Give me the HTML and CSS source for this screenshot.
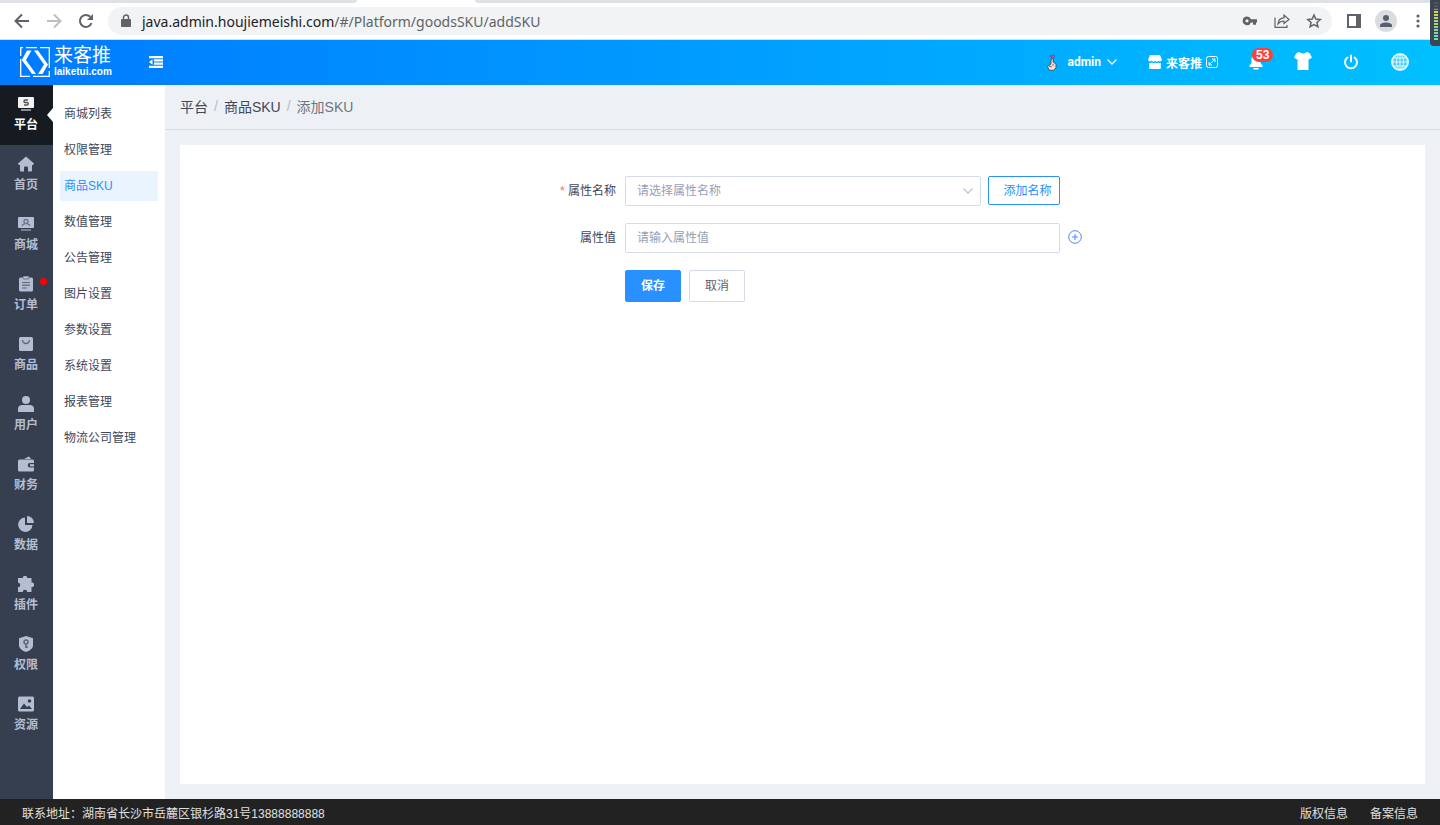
FILE: index.html
```html
<!DOCTYPE html>
<html lang="zh-CN">
<head>
    <meta charset="UTF-8">
    <meta name="viewport" content="width=device-width, initial-scale=1.0">
    <title>添加SKU</title>
    <link rel="stylesheet" href="styles.css">
</head>
<body>
    <div class="browser">
        <div class="tab-strip">
            <span class="tab-left"></span>
            <span class="tab-right"></span>
        </div>
        <div class="toolbar">
            <button type="button" class="icon-btn" aria-label="Back">
                <svg width="16" height="16" viewBox="0 0 16 16" fill="none" stroke="#5f6368" stroke-width="2"><path d="M15 8H2M8 1.5L1.500 8L8 14.500"/></svg>
            </button>
            <button type="button" class="icon-btn" aria-label="Forward">
                <svg width="16" height="16" viewBox="0 0 16 16" fill="none" stroke="#bcbec1" stroke-width="2"><path d="M1 8H14M8 1.500L14.500 8L8 14.500"/></svg>
            </button>
            <button type="button" class="icon-btn" aria-label="Reload">
                <svg width="16" height="16" viewBox="0 0 16 16" fill="none" stroke="#5f6368" stroke-width="2"><path d="M13.500 10.200A6 6 0 1 1 12.300 3.800"/><path d="M15 1v6H9z" fill="#5f6368" stroke="none"/></svg>
            </button>
            <div class="omnibox">
                <svg width="10" height="14" viewBox="0 0 10 14"><rect y="5" width="10" height="8" rx="1" fill="#5f6368"/><path d="M2.500 6V3.500a2.500 2.500 0 0 1 5 0V6" fill="none" stroke="#5f6368" stroke-width="1.500"/></svg>
                <span class="url"><b>java.admin.houjiemeishi.com</b>/#/Platform/goodsSKU/addSKU</span>
                <button type="button" class="icon-btn" aria-label="Passwords">
                    <svg width="16" height="16" viewBox="0 0 16 16"><path fill="#5f6368" fill-rule="evenodd" d="M5 3.500a4.300 4.300 0 0 1 4 2.700h6v3.200h-1v2.400h-3V9.400H9A4.300 4.300 0 1 1 5 3.500zM5 6.200a1.600 1.600 0 1 0 0 3.200a1.600 1.600 0 0 0 0-3.200z"/></svg>
                </button>
                <button type="button" class="icon-btn" aria-label="Share">
                    <svg width="16" height="16" viewBox="0 0 16 16" fill="none" stroke="#5f6368" stroke-width="1.200"><path d="M1 4.500V14.400H13V12"/><path d="M4 11C4.300 7 6.500 5 10 4.800V2L15 6.500L10 10.500V8C7.500 8 5.500 9 4 11z"/></svg>
                </button>
                <button type="button" class="icon-btn" aria-label="Bookmark">
                    <svg width="16" height="16" viewBox="0 0 16 16" fill="none" stroke="#5f6368" stroke-width="1.500"><path d="M8 2L9.800 6.100L14.200 6.500L10.900 9.400L11.900 13.800L8 11.500L4.100 13.800L5.100 9.400L1.800 6.500L6.200 6.100z"/></svg>
                </button>
            </div>
            <button type="button" class="icon-btn" aria-label="Side panel">
                <svg width="16" height="16" viewBox="0 0 16 16"><path fill="#5f6368" fill-rule="evenodd" d="M1 1h14v14H1zM3 3v10h7V3z"/></svg>
            </button>
            <button type="button" class="icon-btn profile" aria-label="Profile">
                <svg width="14" height="14" viewBox="0 0 14 14" fill="#56606f"><circle cx="7" cy="4" r="3"/><path d="M1 13v-1.500C1 9.500 4 8.500 7 8.500s6 1 6 3V13z"/></svg>
            </button>
            <button type="button" class="icon-btn" aria-label="Menu">
                <svg width="16" height="16" viewBox="0 0 16 16" fill="#5f6368"><circle cx="8" cy="3" r="1.600"/><circle cx="8" cy="8" r="1.600"/><circle cx="8" cy="13" r="1.600"/></svg>
            </button>
        </div>
        <div class="meter"><span></span></div>
    </div>

    <header class="header">
        <a href="#" class="logo">
            <svg width="30" height="30" viewBox="0 0 30 30"><path fill="none" stroke="#fff" stroke-width="1.300" d="M3 .7H.7V9M.7 12V29.300H10M13 29.300H29.300V24M29.300 21V.7H20M17 .7H6"/><path fill="#fff" d="M7 3.500H11.500L6 13L16 27H12L1.800 13z"/><path fill="#fff" d="M14 3.500H18L28 17.500L22.500 27H18L24 17.500z"/></svg>
            <span class="logo-text">
                <span class="logo-name">来客推</span>
                <span class="logo-domain">laiketui.com</span>
            </span>
        </a>
        <button type="button" class="icon-btn" aria-label="收起菜单">
            <svg width="14" height="12" viewBox="0 0 14 12" fill="#fff"><path d="M0 0h14v2.200H0zM5 3.300h9v2.200H5zM5 6.600h9v2.200H5zM0 9.800h14v2.200H0zM0 6L3.500 3.300v5.400z"/></svg>
        </button>

        <div class="header-right">
            <button type="button" class="user">
                <svg width="12" height="18" viewBox="0 0 12 18"><path d="M5 6.500L7.500 5.500L7 9L10 11V15L7 17.500L3 17L1.500 13.500L5 11z" fill="#f6e5d5" stroke="#4b4b55" stroke-width=".9"/><path d="M4 2.500L6 3.200L8 1.500L8.500 4L6 5.500z" fill="#d84fb5" stroke="#554083" stroke-width=".7"/><path d="M3 13l3 1M7 11v2" stroke="#4b4b55" stroke-width=".8"/></svg>
                <span>admin</span>
                <svg width="10" height="6" viewBox="0 0 10 6" fill="none" stroke="#fff" stroke-width="1.300"><path d="M.5 .5L5 5L9.500 .5"/></svg>
            </button>
            <a href="#" class="shop">
                <svg width="14" height="14" viewBox="0 0 14 14" fill="#fff"><path d="M2 0h10l1.800 4.500c0 2-2 2.500-3.300 1.300C9.500 7 8 7 7 5.800C6 7 4.500 7 3.500 5.800C2.200 7 0 6.500 .2 4.500z"/><path d="M1.200 8q1.400.3 2.400-.5Q5.200 8.600 7 7.500q1.800 1.100 3.400 0q1 .8 2.400.5V13q0 1-1 1H2.200q-1 0-1-1z"/></svg>
                <span>来客推</span>
                <svg width="12" height="12" viewBox="0 0 12 12" fill="none" stroke="#fff"><rect x=".5" y=".5" width="11" height="11" rx="2"/><path d="M3 9L9 3M6 3H9V6M3 6V9H6"/></svg>
            </a>
            <button type="button" class="icon-btn bell" aria-label="消息">
                <svg width="14" height="16" viewBox="0 0 14 16" fill="#fff"><path d="M7 1a4.500 4.500 0 0 1 4.500 4.500V9L13.500 11.500V13H.5V11.500L2.500 9V5.500A4.500 4.500 0 0 1 7 1zM4.500 14h5v1.500h-5z"/></svg>
                <span class="badge">53</span>
            </button>
            <button type="button" class="icon-btn shirt" aria-label="换肤">
                <svg width="18" height="18" viewBox="0 0 18 18" fill="#fff"><path d="M5.500 0Q9 3 12.500 0L15.500 1L18 5.500L15 7.500L14.500 7V18H3.500V7L3 7.500L0 5.500L2.500 1z"/></svg>
            </button>
            <button type="button" class="icon-btn" aria-label="退出">
                <svg width="16" height="16" viewBox="0 0 16 16" fill="none" stroke="#fff" stroke-width="2" stroke-linecap="round"><path d="M8 1.500V7.500M4.500 3.500A6 6 0 1 0 11.500 3.500"/></svg>
            </button>
            <button type="button" class="icon-btn" aria-label="语言">
                <svg width="20" height="20" viewBox="0 0 20 20" fill="none" stroke="#e2f7ff"><circle cx="10" cy="10" r="8" fill="#fff" fill-opacity=".25" stroke-width="2"/><ellipse cx="10" cy="10" rx="3.500" ry="7.500"/><path d="M10 2v16M2 10h16M3.500 6h13M3.500 14h13"/></svg>
            </button>
        </div>
    </header>

    <div class="main">
        <nav class="rail">
            <a href="#" class="rail-item active">
                <svg width="16" height="16" viewBox="0 0 16 16"><rect y="1" width="16" height="11" rx="1" fill="#f2f2f2"/><path d="M10 4H7.200a1.200 1.200 0 0 0 0 2.500H9a1.200 1.200 0 0 1 0 2.500H6" fill="none" stroke="#555" stroke-width="1.400"/><path d="M3 13h10V15H3z" fill="#8b8e92"/></svg>
                <span>平台</span>
            </a>
            <a href="#" class="rail-item">
                <svg width="16" height="16" viewBox="0 0 16 16"><path fill="#b4bed2" d="M8 .5L16 7.500L15.200 9H14V14.500Q14 15.500 13 15.500H10V11.500Q10 10.500 9 10.500H7Q6 10.500 6 11.500V15.500H3Q2 15.500 2 14.500V9H.8L0 7.500z"/></svg>
                <span>首页</span>
            </a>
            <a href="#" class="rail-item">
                <svg width="16" height="16" viewBox="0 0 16 16"><rect y="1" width="16" height="11" rx="1" fill="#b4bed2"/><path d="M4.500 10V9L7 7.500M11.500 10V9L9 7.500" fill="none" stroke="#6c778b" stroke-width="1.400"/><circle cx="8" cy="5.500" r="2" fill="none" stroke="#6c778b" stroke-width="1.400"/><path d="M3 13h10V15H3z" fill="#727e91"/></svg>
                <span>商城</span>
            </a>
            <a href="#" class="rail-item">
                <svg width="16" height="16" viewBox="0 0 16 16"><rect x="1" y="1.500" width="14" height="14" rx="1.500" fill="#b4bed2"/><rect x="5" y="0" width="6" height="3" rx="1" fill="#b4bed2" stroke="#5c677a" stroke-width=".8"/><path d="M4 6.500h8M4 9.200h8M4 12h5" stroke="#5c677a" stroke-width="1.200"/></svg>
                <span>订单</span>
                <i class="dot"></i>
            </a>
            <a href="#" class="rail-item">
                <svg width="16" height="16" viewBox="0 0 16 16"><rect x="1" y="1" width="14" height="14" rx="1.500" fill="#b4bed2"/><path d="M4.500 4a3.500 3.500 0 0 0 7 0" fill="none" stroke="#5c677a" stroke-width="1.400"/></svg>
                <span>商品</span>
            </a>
            <a href="#" class="rail-item">
                <svg width="16" height="16" viewBox="0 0 16 16" fill="#b4bed2"><circle cx="8" cy="4" r="4"/><path d="M0 16V13Q0 9 4.500 9h7Q16 9 16 13V16z"/></svg>
                <span>用户</span>
            </a>
            <a href="#" class="rail-item">
                <svg width="16" height="16" viewBox="0 0 16 16" fill="#b4bed2"><path d="M1.500 3.500H14.500Q16 3.500 16 5V7H12a2.200 2.200 0 0 0 0 4.500h4V14Q16 15.500 14.500 15.500H1.500Q0 15.500 0 14V5Q0 3.500 1.500 3.500zM6 3L11 .5L13 3z"/><rect x="12" y="8.200" width="4" height="2.200"/></svg>
                <span>财务</span>
            </a>
            <a href="#" class="rail-item">
                <svg width="16" height="16" viewBox="0 0 16 16" fill="#b4bed2"><path d="M7 1.500V9H14.500A7.200 7.200 0 1 1 7 1.500z"/><path d="M9 0A7 7 0 0 1 16 7H9z"/></svg>
                <span>数据</span>
            </a>
            <a href="#" class="rail-item">
                <svg width="16" height="16" viewBox="0 0 16 16" fill="#b4bed2"><path d="M0 2H4.800A2.200 2.200 0 1 1 9.200 2H13.500V6.500A2.300 2.300 0 1 1 13.500 11V16H9.200A2.200 2.200 0 1 0 4.800 16H0V11.300A2.200 2.200 0 1 0 0 6.800z"/></svg>
                <span>插件</span>
            </a>
            <a href="#" class="rail-item">
                <svg width="16" height="16" viewBox="0 0 16 16"><path fill="#b4bed2" d="M8 0L15 2.300V10Q14 14 8 16Q2 14 1 10V2.300z"/><circle cx="8" cy="6" r="2" fill="none" stroke="#5c677a" stroke-width="1.500"/><path d="M8 8v4M8 11h2" stroke="#5c677a" stroke-width="1.500"/></svg>
                <span>权限</span>
            </a>
            <a href="#" class="rail-item">
                <svg width="16" height="16" viewBox="0 0 16 16"><rect y=".5" width="16" height="15" rx="1.500" fill="#b4bed2"/><circle cx="11.500" cy="5" r="1.800" fill="#353f4f"/><path d="M2 13L6 7.500L9 11L11 9.500L14 13z" fill="#353f4f"/></svg>
                <span>资源</span>
            </a>
        </nav>

        <nav class="submenu">
            <a href="#">商城列表</a>
            <a href="#">权限管理</a>
            <a href="#" class="active">商品SKU</a>
            <a href="#">数值管理</a>
            <a href="#">公告管理</a>
            <a href="#">图片设置</a>
            <a href="#">参数设置</a>
            <a href="#">系统设置</a>
            <a href="#">报表管理</a>
            <a href="#">物流公司管理</a>
        </nav>

        <main class="content">
            <div class="breadcrumb">
                <a href="#">平台</a>
                <span class="sep">/</span>
                <a href="#">商品SKU</a>
                <span class="sep">/</span>
                <span class="current">添加SKU</span>
            </div>
            <div class="card">
                <form class="form">
                    <div class="form-row">
                        <label for="attrName"><span class="required">*</span> 属性名称</label>
                        <div class="field">
                            <div class="select-wrap">
                                <select id="attrName">
                                    <option>请选择属性名称</option>
                                </select>
                                <svg width="10" height="6" viewBox="0 0 10 6" fill="none" stroke="#c0c4cc" stroke-width="1.300"><path d="M.5 .5L5 5L9.500 .5"/></svg>
                            </div>
                            <button type="button" class="btn-add">添加名称</button>
                        </div>
                    </div>
                    <div class="form-row">
                        <label for="attrValue">属性值</label>
                        <div class="field">
                            <input type="text" id="attrValue" placeholder="请输入属性值">
                            <button type="button" class="icon-btn plus" aria-label="添加属性值">
                                <svg width="14" height="14" viewBox="0 0 14 14" fill="none" stroke="#4a86ff"><circle cx="7" cy="7" r="6.300"/><path d="M7 4v6M4 7h6"/></svg>
                            </button>
                        </div>
                    </div>
                    <div class="form-actions">
                        <button type="submit" class="btn btn-primary">保存</button>
                        <button type="button" class="btn">取消</button>
                    </div>
                </form>
            </div>
        </main>
    </div>

    <footer class="footer">
        <span>联系地址：湖南省长沙市岳麓区银杉路31号13888888888</span>
        <div class="footer-links">
            <a href="#">版权信息</a>
            <a href="#">备案信息</a>
        </div>
    </footer>
</body>
</html>
```
FILE: styles.css
```css
* {
    margin: 0;
    padding: 0;
    box-sizing: border-box;
}

body {
    display: flex;
    flex-direction: column;
    min-height: 100vh;
    font-family: "Liberation Sans", "Noto Sans CJK SC", sans-serif;
    font-size: 12px;
    color: #414658;
    background: #edf1f5;
}

a {
    color: inherit;
    text-decoration: none;
}

button, input, select {
    font: inherit;
    color: inherit;
}

svg {
    display: block;
    flex: none;
}

.icon-btn {
    display: flex;
    align-items: center;
    justify-content: center;
    flex: none;
    background: none;
    border: none;
    cursor: pointer;
}

/* browser bar */
.browser {
    position: relative;
    background: #fff;
    border-bottom: 1px solid #dadce0;
}

.tab-strip {
    display: flex;
    justify-content: space-between;
    gap: 118px;
    height: 3px;
}

.tab-left {
    width: 357px;
    background: #dee1e6;
    border-bottom-right-radius: 8px;
}

.tab-right {
    flex: 1;
    background: #dee1e6;
    border-bottom-left-radius: 8px;
}

.toolbar {
    display: flex;
    align-items: center;
    gap: 16px;
    height: 36px;
    padding: 0 14px;
}

.omnibox {
    display: flex;
    align-items: center;
    flex: 1;
    gap: 16px;
    height: 28px;
    margin: 0 -2px;
    padding: 0 10px 0 13px;
    border-radius: 14px;
    background: #f1f3f4;
}

.url {
    flex: 1;
    margin-left: -5px;
    font-family: "Noto Sans", sans-serif;
    font-size: 14px;
    color: #5f6368;
}

.url b {
    font-weight: 400;
    color: #202124;
}

.profile {
    width: 22px;
    height: 22px;
    margin: 0 -3px;
    border-radius: 50%;
    background: #dadce0;
}

.meter {
    position: absolute;
    z-index: 2;
    top: 0;
    right: 0;
    width: 10px;
    height: 46px;
    padding: 2px 2px 6px 4px;
    border-radius: 0 0 0 4px;
    background: #3d4553;
}

.meter span {
    display: block;
    height: 38px;
    background:
        repeating-linear-gradient(transparent 0 2px, #3d4553 2px 3px),
        linear-gradient(#555 0 7px, #e2d74c 8px, #9bd67b 22px, #5ce0cf);
}

/* header */
.header {
    display: flex;
    align-items: center;
    height: 45px;
    padding: 0 30px 1px 20px;
    color: #fff;
    background: linear-gradient(90deg, #007aff, #00c0ff);
}

.logo {
    display: flex;
    align-items: center;
    gap: 4px;
    width: 129px;
}

.logo-text {
    display: flex;
    flex-direction: column;
}

.logo-name {
    font-size: 19px;
    line-height: 20px;
}

.logo-domain {
    font-size: 10px;
    line-height: 12px;
    font-weight: 700;
}

.header-right {
    display: flex;
    align-items: center;
    gap: 31px;
    margin-left: auto;
    font-weight: 700;
}

.user {
    display: flex;
    align-items: center;
    gap: 6px;
    border: none;
    background: none;
    font-family: Roboto, sans-serif;
    cursor: pointer;
}

.user span {
    margin-left: 4px;
}

.shop {
    display: flex;
    align-items: center;
    gap: 4px;
}

.bell {
    position: relative;
}

.badge {
    position: absolute;
    top: -6px;
    left: 3px;
    padding: 0 4px;
    border-radius: 7px;
    line-height: 14px;
    font-weight: 700;
    color: #fff;
    background: #f9403d;
}

.shirt {
    padding-bottom: 3px;
}

/* left menus */
.main {
    display: flex;
    flex: 1;
}

.rail {
    width: 53px;
    background: #353f4f;
}

.rail-item {
    position: relative;
    display: flex;
    flex-direction: column;
    align-items: center;
    gap: 4px;
    height: 60px;
    padding: 11px 1px 0 0;
    line-height: 18px;
    font-weight: 700;
    color: #b4bed2;
}

.rail-item.active {
    color: #fff;
    background: #151b21;
}

.rail-item.active::after {
    content: "";
    position: absolute;
    right: 0;
    top: 23px;
    border: 7px solid transparent;
    border-left: none;
    border-right: 6px solid #fff;
}

.dot {
    position: absolute;
    top: 13px;
    right: 6px;
    width: 7px;
    height: 7px;
    border-radius: 50%;
    background: #f00;
}

.submenu {
    display: flex;
    flex-direction: column;
    gap: 6px;
    width: 112px;
    padding: 14px 7px;
    background: #fff;
}

.submenu a {
    padding-left: 4px;
    line-height: 30px;
}

.submenu a.active {
    color: #2890ff;
    background: #e9f4ff;
}

/* content */
.content {
    display: flex;
    flex-direction: column;
    flex: 1;
}

.breadcrumb {
    display: flex;
    align-items: center;
    gap: 6px;
    height: 45px;
    padding: 0 15px 2px;
    border-bottom: 1px solid #d5dbe8;
    font-size: 14px;
}

.sep {
    color: #b4bccc;
}

.current {
    color: #6f7480;
}

.card {
    flex: 1;
    margin: 15px;
    padding-top: 31px;
    background: #fff;
}

.form {
    width: 515px;
    margin: 0 auto;
}

.form-row {
    display: flex;
    align-items: center;
    margin-bottom: 17px;
}

.form-row label {
    width: 80px;
    padding: 0 9px 4px 0;
    text-align: right;
}

.required {
    color: #f56c6c;
}

.field {
    position: relative;
    display: flex;
    flex: 1;
    gap: 7px;
}

.select-wrap {
    position: relative;
    flex: 1;
}

.select-wrap svg {
    position: absolute;
    right: 8px;
    top: 12px;
    pointer-events: none;
}

.field select,
.field input {
    width: 100%;
    height: 30px;
    padding: 0 11px;
    border: 1px solid #d5dbe8;
    border-radius: 2px;
    background: #fff;
    appearance: none;
    outline: none;
}

.field select,
.field input::placeholder {
    color: #97a0b4;
}

.field select:focus,
.field input:focus {
    border-color: #2890ff;
}

.btn-add {
    width: 72px;
    height: 29px;
    padding: 0 0 2px 7px;
    border: 1px solid #2890ff;
    border-radius: 2px;
    color: #2890ff;
    background: #fff;
    cursor: pointer;
}

.plus {
    position: absolute;
    left: 100%;
    top: 7px;
    margin-left: 8px;
}

.form-actions {
    display: flex;
    gap: 8px;
    margin-left: 80px;
}

.btn {
    width: 56px;
    height: 32px;
    padding-bottom: 3px;
    border: 1px solid #d5dbe8;
    border-radius: 2px;
    color: #606266;
    background: #fff;
    cursor: pointer;
}

.btn-primary {
    border-color: #2890ff;
    font-weight: 700;
    color: #fff;
    background: #2890ff;
}

.footer {
    display: flex;
    align-items: center;
    justify-content: space-between;
    height: 26px;
    padding: 0 22px;
    color: #e0e0e0;
    background: #222;
}

.footer-links {
    display: flex;
    gap: 22px;
}
```
